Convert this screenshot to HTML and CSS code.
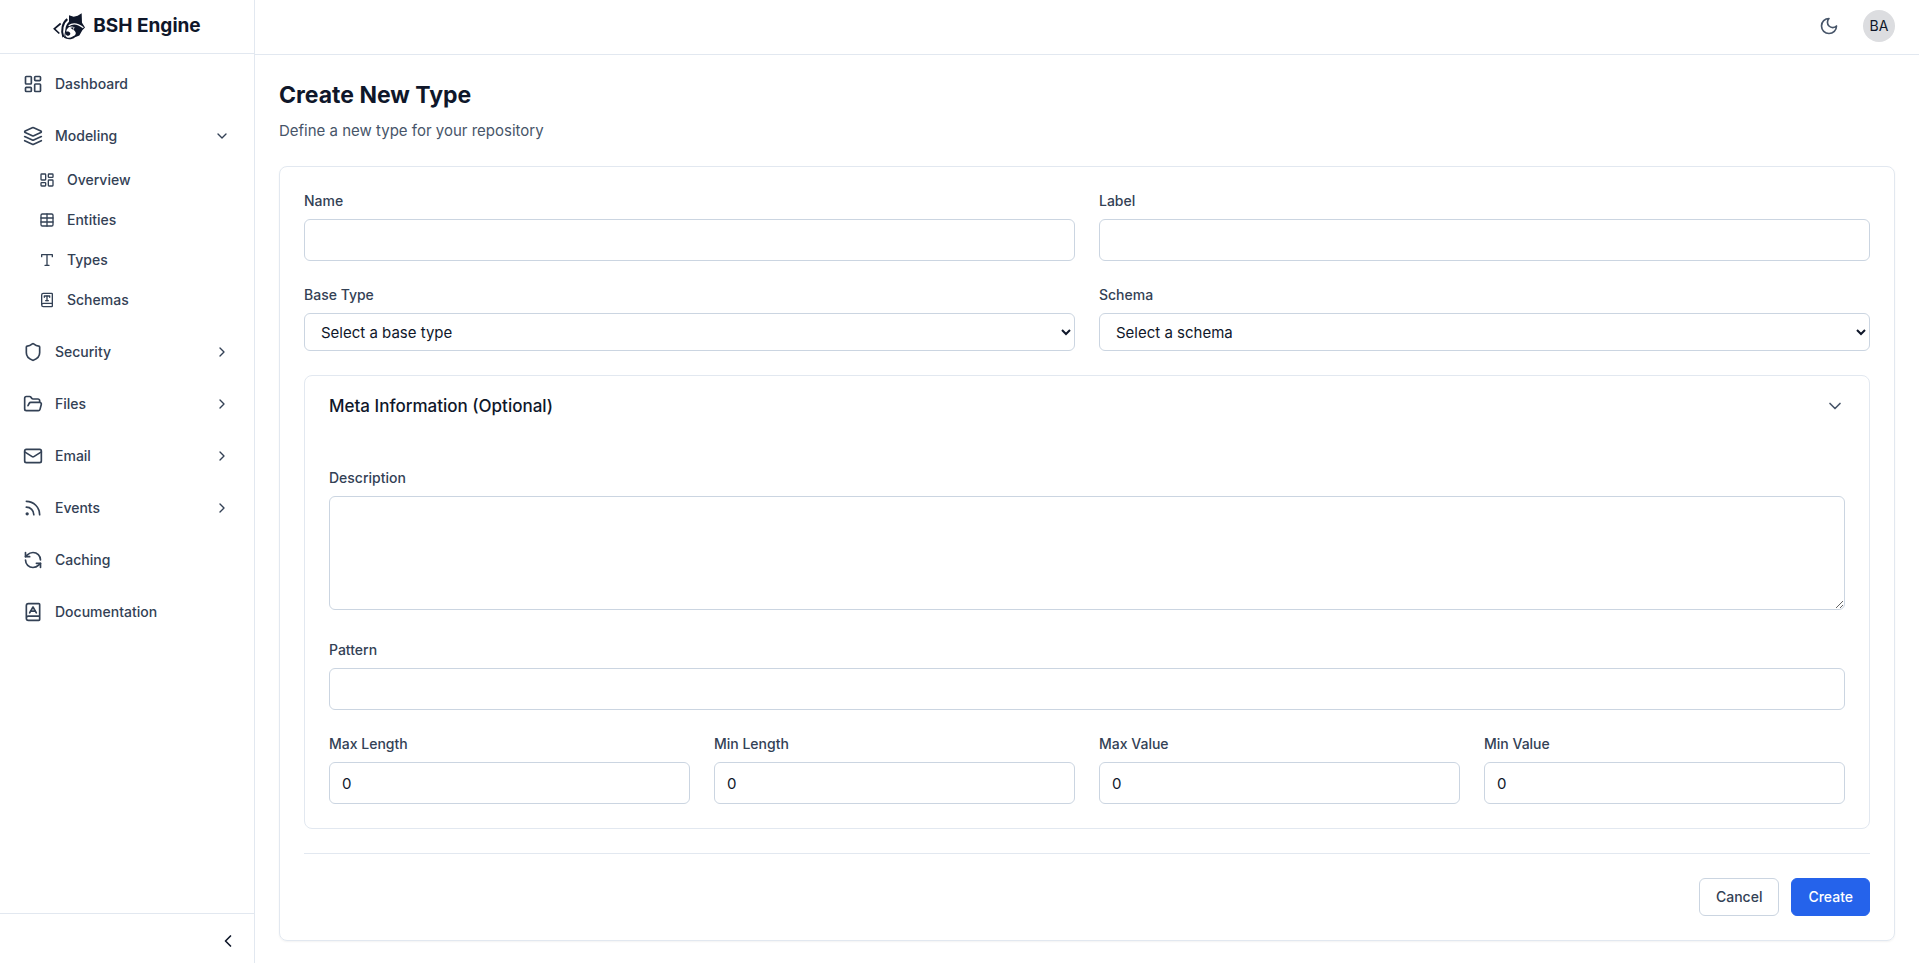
FILE: index.html
```
<!DOCTYPE html>
<html lang="en">
<head>
  <meta charset="UTF-8">
  <meta name="viewport" content="width=device-width, initial-scale=1">
  <title>BSH Engine - Create New Type</title>
  <link rel="stylesheet" href="styles.css">
</head>
<body>
  <aside class="sidebar">
    <div class="brand">
      <svg class="brand-logo" viewBox="0 0 96 80" aria-hidden="true">
        <path d="M23 31 4 47 19 61" fill="none" stroke="currentColor" stroke-width="5"/>
        <path d="M43 18C29 28 23 52 31 72" fill="none" stroke="currentColor" stroke-width="6"/>
        <path d="M48 26 48 6 62 11 74 8 86 0 87 29 96 43 88 51 79 67 66 72C58 80 42 80 33 74L37 50C38 38 42 32 48 26Z" fill="currentColor"/>
        <path d="M47 38C60 28 76 32 91 44" fill="none" stroke="#fff" stroke-width="4"/>
        <path d="M41 50C46 40 56 37 65 43L61 50C66 54 72 60 66 66 60 68 56 74 48 74 42 74 37 70 37 66Z" fill="#fff"/>
        <path d="M38 56C42 54 50 54 52 60 52 66 48 68 43 68 38 66 36 60 38 56Z" fill="currentColor"/>
        <path d="M52 44 62 42 60 50Z" fill="currentColor"/>
      </svg>
      <span>BSH Engine</span>
    </div>

    <nav class="nav">
      <a class="nav-item" href="#">
        <svg class="icon" viewBox="0 0 24 24"><rect width="7" height="9" x="3" y="3" rx="1"/><rect width="7" height="5" x="14" y="3" rx="1"/><rect width="7" height="9" x="14" y="12" rx="1"/><rect width="7" height="5" x="3" y="16" rx="1"/></svg>
        Dashboard
      </a>
      <div class="nav-group">
        <button class="nav-item" type="button" aria-expanded="true">
          <svg class="icon" viewBox="0 0 24 24"><path d="m12.83 2.18a2 2 0 0 0-1.66 0L2.6 6.08a1 1 0 0 0 0 1.83l8.58 3.91a2 2 0 0 0 1.66 0l8.58-3.9a1 1 0 0 0 0-1.83Z"/><path d="m22 17.65-9.17 4.16a2 2 0 0 1-1.66 0L2 17.65"/><path d="m22 12.65-9.17 4.16a2 2 0 0 1-1.66 0L2 12.65"/></svg>
          Modeling
          <svg class="icon icon-sm chevron" viewBox="0 0 24 24"><path d="m6 9 6 6 6-6"/></svg>
        </button>
        <div class="subnav">
          <a class="nav-item nav-sub" href="#">
            <svg class="icon icon-sm" viewBox="0 0 24 24"><rect width="7" height="9" x="3" y="3" rx="1"/><rect width="7" height="5" x="14" y="3" rx="1"/><rect width="7" height="9" x="14" y="12" rx="1"/><rect width="7" height="5" x="3" y="16" rx="1"/></svg>
            Overview
          </a>
          <a class="nav-item nav-sub" href="#">
            <svg class="icon icon-sm" viewBox="0 0 24 24"><path d="M12 3v18"/><rect width="18" height="18" x="3" y="3" rx="2"/><path d="M3 9h18"/><path d="M3 15h18"/></svg>
            Entities
          </a>
          <a class="nav-item nav-sub" href="#">
            <svg class="icon icon-sm" viewBox="0 0 24 24"><path d="M4 7V4h16v3"/><path d="M9 20h6"/><path d="M12 4v16"/></svg>
            Types
          </a>
          <a class="nav-item nav-sub" href="#">
            <svg class="icon icon-sm" viewBox="0 0 24 24"><path d="M4 19.5v-15A2.5 2.5 0 0 1 6.5 2H19a1 1 0 0 1 1 1v18a1 1 0 0 1-1 1H6.5a1 1 0 0 1 0-5H20"/><path d="M10 13h4"/><path d="M12 6v7"/><path d="M16 8V6H8v2"/></svg>
            Schemas
          </a>
        </div>
      </div>
      <button class="nav-item" type="button" aria-expanded="false">
        <svg class="icon" viewBox="0 0 24 24"><path d="M20 13c0 5-3.5 7.5-7.66 8.95a1 1 0 0 1-.67-.01C7.5 20.5 4 18 4 13V6a1 1 0 0 1 1-1c2 0 4.5-1.2 6.24-2.72a1.17 1.17 0 0 1 1.52 0C14.51 3.81 17 5 19 5a1 1 0 0 1 1 1z"/></svg>
        Security
        <svg class="icon icon-sm chevron" viewBox="0 0 24 24"><path d="m9 18 6-6-6-6"/></svg>
      </button>
      <button class="nav-item" type="button" aria-expanded="false">
        <svg class="icon" viewBox="0 0 24 24"><path d="m6 14 1.5-2.9A2 2 0 0 1 9.24 10H20a2 2 0 0 1 1.94 2.5l-1.54 6a2 2 0 0 1-1.95 1.5H4a2 2 0 0 1-2-2V5a2 2 0 0 1 2-2h3.9a2 2 0 0 1 1.69.9l.81 1.2a2 2 0 0 0 1.67.9H18a2 2 0 0 1 2 2v2"/></svg>
        Files
        <svg class="icon icon-sm chevron" viewBox="0 0 24 24"><path d="m9 18 6-6-6-6"/></svg>
      </button>
      <button class="nav-item" type="button" aria-expanded="false">
        <svg class="icon" viewBox="0 0 24 24"><rect width="20" height="16" x="2" y="4" rx="2"/><path d="m22 7-8.97 5.7a1.94 1.94 0 0 1-2.06 0L2 7"/></svg>
        Email
        <svg class="icon icon-sm chevron" viewBox="0 0 24 24"><path d="m9 18 6-6-6-6"/></svg>
      </button>
      <button class="nav-item" type="button" aria-expanded="false">
        <svg class="icon" viewBox="0 0 24 24"><path d="M4 11a9 9 0 0 1 9 9"/><path d="M4 4a16 16 0 0 1 16 16"/><circle cx="5" cy="19" r="1"/></svg>
        Events
        <svg class="icon icon-sm chevron" viewBox="0 0 24 24"><path d="m9 18 6-6-6-6"/></svg>
      </button>
      <a class="nav-item" href="#">
        <svg class="icon" viewBox="0 0 24 24"><path d="M21 12a9 9 0 0 0-9-9 9.75 9.75 0 0 0-6.74 2.74L3 8"/><path d="M3 3v5h5"/><path d="M3 12a9 9 0 0 0 9 9 9.75 9.75 0 0 0 6.74-2.74L21 16"/><path d="M16 16h5v5"/></svg>
        Caching
      </a>
      <a class="nav-item" href="#">
        <svg class="icon" viewBox="0 0 24 24"><path d="M4 19.5v-15A2.5 2.5 0 0 1 6.5 2H19a1 1 0 0 1 1 1v18a1 1 0 0 1-1 1H6.5a1 1 0 0 1 0-5H20"/><path d="m8 13 4-7 4 7"/><path d="M9.1 11h5.7"/></svg>
        Documentation
      </a>
    </nav>

    <div class="sidebar-footer">
      <button class="icon-btn" type="button" aria-label="Collapse sidebar">
        <svg class="icon" viewBox="0 0 24 24"><path d="m15 18-6-6 6-6"/></svg>
      </button>
    </div>
  </aside>

  <div class="page">
    <header class="topbar">
      <button class="icon-btn theme-btn" type="button" aria-label="Toggle theme">
        <svg class="icon" viewBox="0 0 24 24"><path d="M12 3a6 6 0 0 0 9 9 9 9 0 1 1-9-9Z"/></svg>
      </button>
      <button class="avatar" type="button">BA</button>
    </header>

    <main class="content">
      <h1>Create New Type</h1>
      <p class="subtitle">Define a new type for your repository</p>

      <form class="card">
        <div class="grid grid-2">
          <div class="field">
            <label for="name">Name</label>
            <input id="name" type="text">
          </div>
          <div class="field">
            <label for="label">Label</label>
            <input id="label" type="text">
          </div>
          <div class="field">
            <label for="baseType">Base Type</label>
            <select id="baseType">
              <option>Select a base type</option>
            </select>
          </div>
          <div class="field">
            <label for="schema">Schema</label>
            <select id="schema">
              <option>Select a schema</option>
            </select>
          </div>
        </div>

        <section class="meta">
          <button class="meta-toggle" type="button" aria-expanded="true">
            Meta Information (Optional)
            <svg class="icon" viewBox="0 0 24 24"><path d="m6 9 6 6 6-6"/></svg>
          </button>
          <div class="meta-body">
            <div class="field field-area">
              <label for="description">Description</label>
              <textarea id="description" rows="4"></textarea>
            </div>
            <div class="field">
              <label for="pattern">Pattern</label>
              <input id="pattern" type="text">
            </div>
            <div class="grid grid-4">
              <div class="field">
                <label for="maxLength">Max Length</label>
                <input id="maxLength" type="number" value="0">
              </div>
              <div class="field">
                <label for="minLength">Min Length</label>
                <input id="minLength" type="number" value="0">
              </div>
              <div class="field">
                <label for="maxValue">Max Value</label>
                <input id="maxValue" type="number" value="0">
              </div>
              <div class="field">
                <label for="minValue">Min Value</label>
                <input id="minValue" type="number" value="0">
              </div>
            </div>
          </div>
        </section>

        <div class="actions">
          <button class="btn" type="button">Cancel</button>
          <button class="btn btn-primary" type="submit">Create</button>
        </div>
      </form>
    </main>
  </div>
</body>
</html>
```
FILE: styles.css
```
* {
  box-sizing: border-box;
}
body {
  margin: 0;
  min-height: 100vh;
  display: flex;
  background: #fff;
  color: #0f172a;
  font-family: Inter, "Liberation Sans", sans-serif;
  font-size: 15px;
  line-height: 24px;
}
button, input, select, textarea {
  font: inherit;
  color: inherit;
}
button {
  background: none;
  border: none;
  padding: 0;
  cursor: pointer;
}
.icon {
  width: 20px;
  height: 20px;
  flex-shrink: 0;
  fill: none;
  stroke: currentColor;
  stroke-width: 2;
  stroke-linecap: round;
  stroke-linejoin: round;
}
.icon-sm {
  width: 16px;
  height: 16px;
}

/* Sidebar */
.sidebar {
  position: sticky;
  top: 0;
  width: 255px;
  height: 100vh;
  flex-shrink: 0;
  display: flex;
  flex-direction: column;
  border-right: 1px solid #e2e8f0;
}
.brand {
  display: flex;
  align-items: center;
  justify-content: center;
  gap: 8px;
  height: 54px;
  padding-bottom: 1px;
  border-bottom: 1px solid #e2e8f0;
  font-size: 19px;
  font-weight: 700;
}
.brand-logo {
  width: 32px;
  height: 27px;
}
.nav {
  flex: 1;
  display: flex;
  flex-direction: column;
  gap: 8px;
  padding: 8px;
  overflow-y: auto;
}
.nav-item {
  display: flex;
  align-items: center;
  gap: 12px;
  width: 100%;
  height: 44px;
  flex-shrink: 0;
  padding: 0 16px 0 15px;
  border-radius: 6px;
  color: #334155;
  font-size: 14px;
  font-weight: 500;
  line-height: 20px;
  text-decoration: none;
}
.nav-item:hover {
  background: #f1f5f9;
}
.chevron {
  margin-left: auto;
}
.subnav {
  display: flex;
  flex-direction: column;
  gap: 4px;
  margin-left: 16px;
  padding: 4px 0;
}
.nav-sub {
  height: 36px;
}
.sidebar-footer {
  display: flex;
  justify-content: flex-end;
  height: 50px;
  padding: 4px 16px 0;
  border-top: 1px solid #e2e8f0;
}
.icon-btn {
  display: flex;
  align-items: center;
}

/* Top bar */
.page {
  flex: 1;
  min-width: 0;
}
.topbar {
  display: flex;
  align-items: center;
  justify-content: flex-end;
  gap: 24px;
  height: 55px;
  padding: 0 24px 2px;
  border-bottom: 1px solid #e2e8f0;
}
.theme-btn {
  color: #475569;
}
.avatar {
  width: 32px;
  height: 32px;
  border-radius: 50%;
  background: #dcdde0;
  font-size: 14px;
  line-height: 20px;
}

/* Content */
.content {
  padding: 24px;
}
h1 {
  margin: 0 0 8px;
  font-size: 23px;
  line-height: 32px;
  font-weight: 700;
}
.subtitle {
  margin: 0 0 23px;
  color: #475569;
}
.card {
  padding: 24px;
  border: 1px solid #e2e8f0;
  border-radius: 8px;
  box-shadow: 0 1px 2px rgba(0, 0, 0, 0.05);
}
.grid {
  display: grid;
  gap: 24px;
}
.grid-2 {
  grid-template-columns: repeat(2, 1fr);
}
.grid-4 {
  grid-template-columns: repeat(4, 1fr);
}
.field {
  display: flex;
  flex-direction: column;
  gap: 8px;
  min-width: 0;
}
.field label {
  color: #334155;
  font-size: 14px;
  font-weight: 500;
  line-height: 20px;
}
.field input, .field select, .field textarea {
  width: 100%;
  padding: 8px 12px;
  background: #fff;
  border: 1px solid #cbd5e1;
  border-radius: 6px;
}
.field input {
  height: 42px;
}
.field select {
  height: 38px;
}
.field textarea {
  display: block;
  resize: vertical;
}
.field input[type="number"] {
  appearance: textfield;
}
.field-area {
  padding-bottom: 6px;
}
.meta {
  margin-top: 24px;
  border: 1px solid #e2e8f0;
  border-radius: 8px;
}
.meta-toggle {
  display: flex;
  align-items: center;
  justify-content: space-between;
  width: 100%;
  padding: 16px 24px;
  font-size: 17px;
  font-weight: 500;
  line-height: 28px;
}
.meta-toggle .icon {
  color: #475569;
}
.meta-body {
  display: flex;
  flex-direction: column;
  gap: 24px;
  padding: 32px 24px 24px;
}
.actions {
  display: flex;
  justify-content: flex-end;
  gap: 12px;
  margin-top: 24px;
  padding-top: 24px;
  border-top: 1px solid #e2e8f0;
}
.btn {
  height: 38px;
  padding: 0 16px;
  border: 1px solid #cbd5e1;
  border-radius: 6px;
  color: #334155;
  font-size: 14px;
  font-weight: 500;
  line-height: 20px;
}
.btn-primary {
  background: #2563eb;
  border-color: #2563eb;
  color: #fff;
}
```
